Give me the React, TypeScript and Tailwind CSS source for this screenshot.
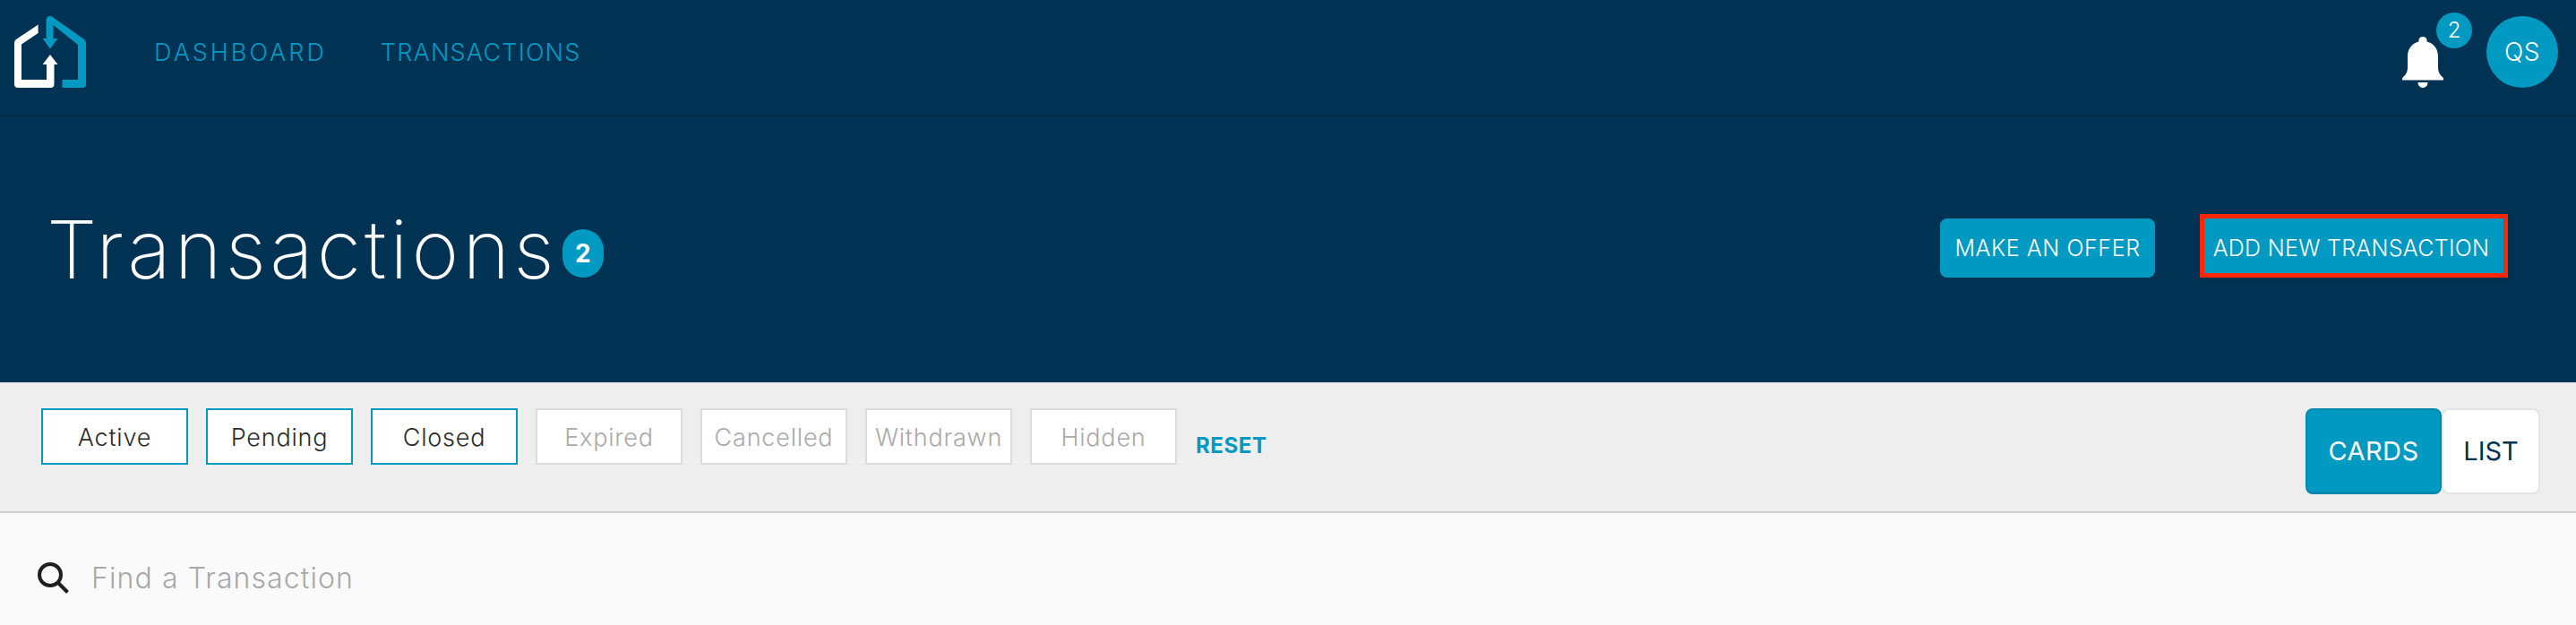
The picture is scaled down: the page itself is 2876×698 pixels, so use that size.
const font = { fontFamily: 'Inter, "Noto Sans", sans-serif' }

function Logo() {
  return (
    <svg width="120" height="120" viewBox="0 0 120 120" className="absolute left-0 top-0">
      <path
        fill="#ffffff"
        d="M42.6 27.5V37L24 49.5V89H52V72H47.6L56 61L64.5 72H60.5V94Q60.5 98 56.5 98H20Q16 98 16 94V48Q16 45.5 18 44Z"
      />
      <path
        fill="#0099c1"
        d="M51.6 23Q51.6 18 56 18Q58 18 60 20L94 44Q96 46 96 48V94Q96 98 92 98H69.5V89H87V50L59.5 28V43H64.5L56 54.5L47.6 43H51.6Z"
      />
    </svg>
  )
}

function Bell() {
  return (
    <svg width="46" height="57" viewBox="0 0 46 57" fill="#ffffff">
      <path d="M23 0C20 0 18.4 2 18.4 4.6V5.6C10.5 7.6 6 14 6 22V34C6 40 3.6 43 0.6 45.4C0.1 45.8 0 46.2 0 47V48.6H46V47C46 46.2 45.9 45.8 45.4 45.4C42.4 43 40 40 40 34V22C40 14 35.5 7.6 27.6 5.6V4.6C27.6 2 26 0 23 0Z" />
      <path d="M17.5 51H28.5C28.5 54.5 26 57 23 57C20 57 17.5 54.5 17.5 51Z" />
    </svg>
  )
}

const on = ['Active', 'Pending', 'Closed']
const off = ['Expired', 'Cancelled', 'Withdrawn', 'Hidden']

export default function App() {
  return (
    <div className="w-[2876px] h-[698px] overflow-hidden bg-[#fafafa]" style={font}>
      <header className="relative flex h-[130px] items-start border-b-2 border-[#002b47] bg-[#003353]">
        <Logo />
        <nav className="ml-[172px] flex h-[118px] items-center gap-[60px] text-[27px] font-light text-[#0099c1]">
          <span className="tracking-[3px]">DASHBOARD</span>
          <span className="tracking-[1.2px]">TRANSACTIONS</span>
        </nav>
        <div className="ml-auto mr-[20px] mt-[18px] flex items-start">
          <div className="relative mt-[23px] mr-[48px]">
            <Bell />
            <span className="absolute left-[38px] top-[-27px] flex h-[40px] w-[40px] items-center justify-center rounded-full bg-[#0099c1] text-[24px] font-light text-white">
              2
            </span>
          </div>
          <div className="flex h-[80px] w-[80px] items-center justify-center rounded-full bg-[#0099c1] text-[28px] font-light tracking-[0.5px] text-white">
            QS
          </div>
        </div>
      </header>

      <section className="flex h-[297px] items-center bg-[#003353] pl-[52px] pr-[76px]">
        <h1 className="text-[90px] leading-none font-extralight tracking-[4.1px] text-white">Transactions</h1>
        <span className="ml-[5px] mt-[8px] flex h-[54px] w-[46px] items-center justify-center rounded-[23px] bg-[#0099c1] text-[28px] font-bold text-white">
          2
        </span>
        <div className="ml-auto flex items-end gap-[50px] pb-[8px]">
          <button className="flex h-[66px] w-[240px] items-center justify-center rounded-[8px] bg-[#0099c1] pt-[2px] text-[25px] font-light tracking-[0.6px] text-white">
            MAKE AN OFFER
          </button>
          <button className="flex h-[71px] w-[344px] items-center justify-center border-[5px] border-[#ff2600] bg-[#0099c1] pt-[6px] pr-[6px] text-[25px] font-light tracking-[0.3px] text-white shadow-md">
            ADD NEW TRANSACTION
          </button>
        </div>
      </section>

      <section className="flex h-[146px] items-start border-b-2 border-[#d0d0d0] bg-[#eeeeee] pl-[46px] pr-[40px] pt-[29px]">
        <div className="flex gap-[20px]">
          {on.map(label => (
            <div
              key={label}
              className="flex h-[63px] w-[164px] items-center justify-center border-2 border-[#0099c1] bg-white pt-[3px] text-[27px] font-light tracking-[0.8px] text-[#2b2b2b]"
            >
              {label}
            </div>
          ))}
          {off.map(label => (
            <div
              key={label}
              className="flex h-[63px] w-[164px] items-center justify-center border-2 border-[#dddddd] bg-white pt-[3px] text-[27px] font-light tracking-[0.8px] text-[#aaaaaa]"
            >
              {label}
            </div>
          ))}
        </div>
        <span className="ml-[21px] mt-[27px] text-[24px] leading-[30px] font-bold tracking-[0.6px] text-[#0099c1]">RESET</span>
        <div className="ml-auto flex">
          <div className="flex h-[96px] w-[152px] items-center justify-center rounded-[8px] border-2 border-b-[3px] border-[#0089ad] bg-[#0099c1] text-[29px] font-normal tracking-[0.4px] text-white">
            CARDS
          </div>
          <div className="flex h-[96px] w-[110px] items-center justify-center rounded-[8px] border-2 border-[#e4e4e4] bg-white text-[29px] font-normal text-[#003353]">
            LIST
          </div>
        </div>
      </section>

      <section className="h-[125px] bg-[#fafafa] pl-[42px] pt-[55px]">
        <div className="flex h-[35px] items-center">
          <svg width="35" height="35" viewBox="0 0 35 35" fill="none" stroke="#1f1f1f">
            <circle cx="14" cy="14" r="12" strokeWidth="4" />
            <line x1="23" y1="23" x2="33.5" y2="33.5" strokeWidth="4" />
          </svg>
          <span className="ml-[25px] text-[32px] font-light tracking-[1.1px] text-[#a8a8a8]">Find a Transaction</span>
        </div>
      </section>
    </div>
  )
}
